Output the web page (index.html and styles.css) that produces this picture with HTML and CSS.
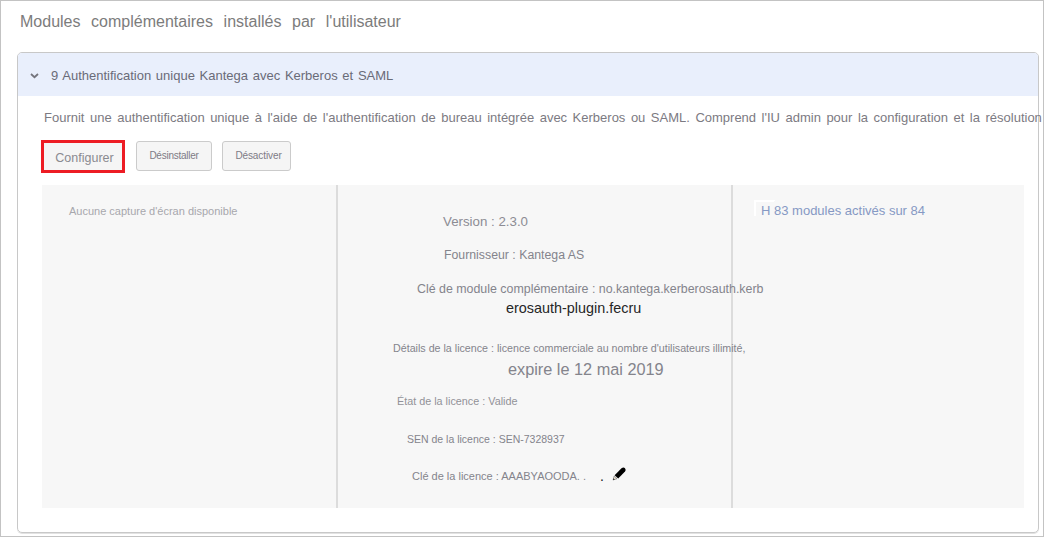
FILE: index.html
```html
<!DOCTYPE html>
<html lang="fr">
<head>
<meta charset="utf-8">
<title>Modules complémentaires</title>
<link rel="stylesheet" href="styles.css">
</head>
<body>
<main class="page">
  <h1 class="title">Modules complémentaires installés par l'utilisateur</h1>
  <section class="panel">
    <header class="panel-header">
      <svg class="chevron" width="9" height="6" viewBox="0 0 9 6"><path d="M1 1 L4.5 4.2 L8 1" fill="none" stroke="#74747c" stroke-width="1.8"/></svg>
      <h2 class="panel-title">9 Authentification unique Kantega avec Kerberos et SAML</h2>
    </header>
    <p class="description">Fournit une authentification unique à l'aide de l'authentification de bureau intégrée avec Kerberos ou SAML. Comprend l'IU admin pour la configuration et la résolution</p>
    <div class="actions">
      <button class="btn btn-configure">Configurer</button>
      <button class="btn btn-uninstall">Désinstaller</button>
      <button class="btn btn-disable">Désactiver</button>
    </div>
    <div class="details">
      <div class="col shots">Aucune capture d'écran disponible</div>
      <div class="col info">
        <p class="row version">Version : 2.3.0</p>
        <p class="row vendor">Fournisseur : Kantega AS</p>
        <p class="row key">Clé de module complémentaire : no.kantega.kerberosauth.kerb</p>
        <p class="row key-rest">erosauth-plugin.fecru</p>
        <p class="row license">Détails de la licence : licence commerciale au nombre d'utilisateurs illimité,</p>
        <p class="row expiry">expire le 12 mai 2019</p>
        <p class="row state">État de la licence : Valide</p>
        <p class="row sen">SEN de la licence : SEN-7328937</p>
        <p class="row license-key"><span class="key-value">Clé de la licence : AAABYAOODA. .</span><span class="dot">.</span>
          <svg class="pencil" width="15" height="14" viewBox="0 0 15 14"><path d="M2.6 8.2 L9.5 1.3 Q11.5 0 13 1.2 Q14.4 2.8 13 4.6 L6.2 11.6 Z" fill="#000"/><path d="M2.2 9 L5 11.7 L1.1 12.9 Z" fill="#eee3d3" stroke="#666" stroke-width=".6"/><path d="M.9 13.2 L1.4 11.3 L2.8 12.6 Z" fill="#333"/></svg>
        </p>
      </div>
      <div class="col modules"><span class="modules-link">H 83 modules activés sur 84</span></div>
    </div>
  </section>
</main>
</body>
</html>
```
FILE: styles.css
```css
* { box-sizing: border-box; }
body {
  margin: 0;
  background: #fff;
  font-family: "Liberation Sans", Arial, sans-serif;
  color: #84848c;
}
h1, h2, p { margin: 0; font-weight: normal; white-space: nowrap; }
.page {
  width: 1044px;
  height: 537px;
  border: 1px solid #c3c3c3;
  padding: 11px 0 0 16px;
  overflow: hidden;
}
.title {
  height: 40px;
  padding-left: 3px;
  font-size: 16px;
  line-height: 20px;
  word-spacing: 6.2px;
  color: #7c7c7c;
}
.panel {
  width: 1022px;
  height: 481px;
  border: 1px solid #c8c8c8;
  border-radius: 5px;
  box-shadow: 0 1px 0 #e2e2e2;
}
.panel-header {
  display: flex;
  align-items: center;
  height: 43px;
  padding-left: 12px;
  background: #e9effc;
  border-radius: 4px 4px 0 0;
}
.chevron { margin-top: 2px; }
.panel-title {
  padding: 2px 0 0 12px;
  font-size: 13px;
  line-height: 16px;
  word-spacing: 1.1px;
  color: #696b78;
}
.description {
  padding: 14px 0 0 26px;
  font-size: 13px;
  line-height: 16px;
  word-spacing: 1.9px;
  color: #7c7a82;
}
.actions {
  display: flex;
  align-items: flex-start;
  height: 45px;
  margin-top: 14px;
  padding-left: 23px;
}
.btn {
  height: 30px;
  margin: 1px 0 0;
  padding: 0;
  border: 1px solid #cbcbcb;
  border-radius: 3px;
  background: #f5f5f5;
  font: 10px/16px "Liberation Sans", Arial, sans-serif;
  color: #7e7b85;
}
.btn-configure {
  width: 84px;
  height: 33px;
  margin: 0;
  padding: 2px 0 0 3px;
  border: 3px solid #ed1c24;
  border-radius: 0;
  font-size: 12.5px;
  color: #8a8a90;
}
.btn-uninstall { width: 76px; margin-left: 11px; letter-spacing: -.25px; }
.btn-disable { width: 69px; margin-left: 10px; padding-left: 4px; letter-spacing: -.1px; }
.details {
  display: grid;
  grid-template-columns: 294px 395px 293px;
  width: 982px;
  height: 323px;
  margin-left: 24px;
  background: #f7f7f7;
}
.shots {
  padding: 18px 0 0 27px;
  font-size: 11px;
  line-height: 16px;
  white-space: nowrap;
  color: #a7a7ad;
}
/* Long values run past the column and stay above the next divider. */
.info { z-index: 1; padding-top: 29px; border-left: 2px solid #dcdcdc; }
.row { line-height: 16px; height: 16px; }
.version { padding-left: 105px; font-size: 13.3px; color: #8c8c94; }
.vendor { margin-top: 17px; padding-left: 106px; font-size: 12.3px; }
.key { margin-top: 18px; padding-left: 79px; font-size: 12.4px; }
.key-rest { margin-top: 3px; padding-left: 168px; font-size: 14.4px; color: #262626; }
.license { margin-top: 24px; padding-left: 55px; font-size: 10.7px; }
.expiry { margin-top: 5px; padding-left: 170px; font-size: 16.3px; }
.state { margin-top: 16px; padding-left: 59px; font-size: 10.8px; color: #929298; }
.sen { margin-top: 22px; padding-left: 69px; font-size: 10.5px; }
.license-key { display: flex; margin-top: 21px; padding-left: 74px; font-size: 11px; }
.key-value { width: 188px; }
.dot { width: 12px; font-size: 14px; color: #222; }
.pencil { margin-top: -1px; }
.modules { padding: 15px 0 0 21px; border-left: 2px solid #dcdcdc; }
.modules-link {
  display: block;
  width: 190px;
  height: 16px;
  padding-left: 5px;
  border: solid #fff;
  border-width: 2px 0 0 2px;
  border-image: linear-gradient(135deg, #fff 15px, transparent 15px) 2;
  background: linear-gradient(#fff, #fff) 0 0 / 15px 2px no-repeat border-box;
  font-size: 13px;
  line-height: 17px;
  white-space: nowrap;
  color: #8699c4;
}
```
